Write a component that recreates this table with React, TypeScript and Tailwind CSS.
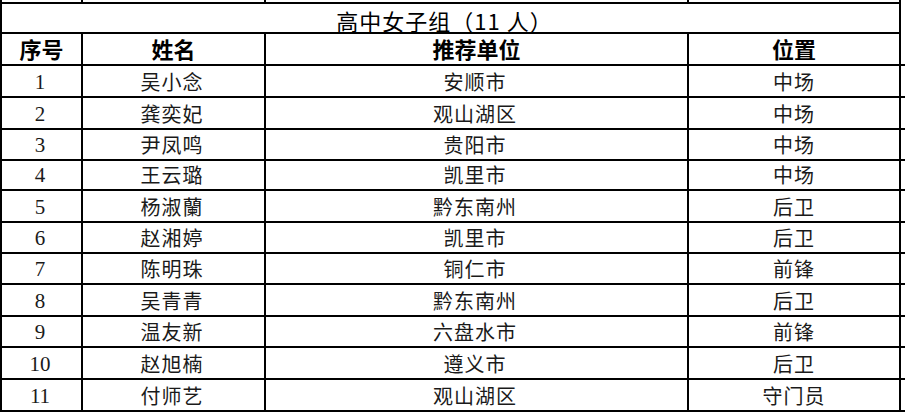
const players = [
  ["1", "吴小念", "安顺市", "中场"],
  ["2", "龚奕妃", "观山湖区", "中场"],
  ["3", "尹凤鸣", "贵阳市", "中场"],
  ["4", "王云璐", "凯里市", "中场"],
  ["5", "杨淑蘭", "黔东南州", "后卫"],
  ["6", "赵湘婷", "凯里市", "后卫"],
  ["7", "陈明珠", "铜仁市", "前锋"],
  ["8", "吴青青", "黔东南州", "后卫"],
  ["9", "温友新", "六盘水市", "前锋"],
  ["10", "赵旭楠", "遵义市", "后卫"],
  ["11", "付师艺", "观山湖区", "守门员"],
];

// row heights measured off the sheet
const heights = ["h-[32px]", "h-[32px]", "h-[31px]", "h-[30px]", "h-[32px]", "h-[31px]", "h-[31px]", "h-[32px]", "h-[31px]", "h-[32px]", "h-[32px]"];

const cols = "grid grid-cols-[83px_183px_423px_212px]";
const cell = "flex items-end justify-center border-r-2 border-black";

export default function App() {
  return (
    <div className="w-[905px] h-[413px] overflow-hidden bg-white text-black font-['Liberation_Serif','Noto_Sans_CJK_SC',serif]">
      {/* cut-off row from the sheet above */}
      <div className={`${cols} h-[2px]`}>
        <div className={`${cell} border-l-2`} />
        <div className={cell} />
        <div className={cell} />
        <div className={cell} />
      </div>

      <div className="flex h-[32px] w-[901px] items-end justify-center border-x-2 border-y-2 border-black pb-[1px] text-[22px] leading-none font-['Noto_Sans_CJK_SC',sans-serif]">
        <span className="pr-[12px] tracking-[1px]">高中女子组（11 人）</span>
      </div>

      <div className={`${cols} h-[32px] border-b-2 border-black text-[22px] font-bold leading-none`}>
        <div className={`${cell} border-l-2 pb-[2px]`}>序号</div>
        <div className={`${cell} pb-[2px]`}>姓名</div>
        <div className={`${cell} pb-[2px]`}>推荐单位</div>
        <div className={`${cell} pb-[2px]`}>位置</div>
      </div>

      {players.map((p, i) => (
        <div key={p[0]} className={`${cols} ${heights[i]} border-b-2 border-black text-[20px] leading-none text-[#1a1a1a]`}>
          <div className={`${cell} border-l-2 pb-[3px] pr-[3px] text-[21px]`}>{p[0]}</div>
          <div className={`${cell} pb-[3px] pr-[3px] tracking-[1px]`}>{p[1]}</div>
          <div className={`${cell} pb-[3px] pr-[3px] tracking-[1px]`}>{p[2]}</div>
          <div className={`${cell} pb-[3px] tracking-[1px]`}>{p[3]}</div>
        </div>
      ))}
    </div>
  );
}
